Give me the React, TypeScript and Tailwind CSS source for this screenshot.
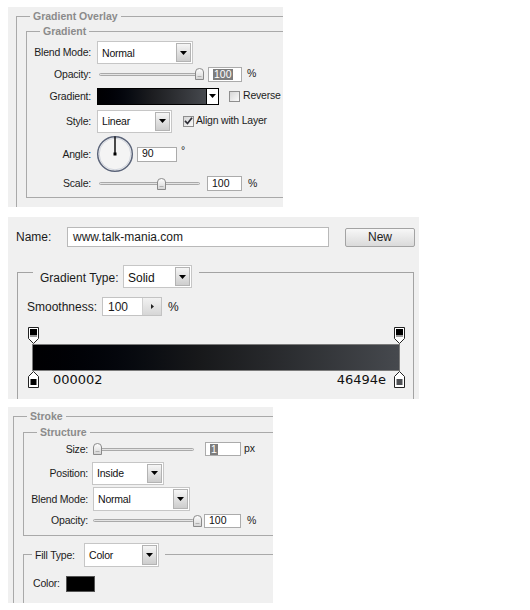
import React from "react";

function DownTri() {
  return (
    <svg width="7" height="4" viewBox="0 0 7 4">
      <path d="M0 0H7L3.5 4Z" fill="#000" />
    </svg>
  );
}

function Dropdown({ cls, text, textCls = "text-[10.5px] tracking-[-0.2px]" }: { cls: string; text: string; textCls?: string }) {
  return (
    <div className={`flex items-stretch bg-white border border-[#c6c6c6] ${cls}`}>
      <span className={`flex-1 flex items-center pl-[4px] pt-[2px] text-[#111] ${textCls}`}>{text}</span>
      <div className="w-[15px] my-[1px] mr-[1px] border border-[#b3b3b3] bg-linear-to-b from-[#f6f6f6] to-[#cdcdcd] flex items-center justify-center">
        <DownTri />
      </div>
    </div>
  );
}

function Thumb() {
  return (
    <svg width="9" height="12" viewBox="0 0 9 12">
      <defs>
        <linearGradient id="tg" x1="0" y1="0" x2="0" y2="1">
          <stop offset="0" stopColor="#ffffff" />
          <stop offset="1" stopColor="#d4d4d4" />
        </linearGradient>
      </defs>
      <path d="M0.5 11.5V4Q0.5 0.5 4.5 0.5Q8.5 0.5 8.5 4V11.5Z" fill="url(#tg)" stroke="#8a8a8a" />
      <path d="M2.5 8.5H6.5" stroke="#b0b0b0" />
    </svg>
  );
}

function Slider({ thumbCls }: { thumbCls: string }) {
  return (
    <div className="relative w-[106px] h-[14px] flex items-center">
      <div className="ml-[2px] w-[101px] h-[3px] rounded-full border border-[#a9a9a9] bg-[#e4e4e4]" />
      <div className={`absolute top-[1px] ${thumbCls}`}>
        <Thumb />
      </div>
    </div>
  );
}

function Box({ cls, children }: { cls: string; children: React.ReactNode }) {
  return (
    <div className={`bg-white border border-[#ababab] flex items-center pl-[4px] text-[10.5px] text-[#111] ${cls}`}>
      {children}
    </div>
  );
}

function Sel({ children }: { children: React.ReactNode }) {
  return <span className="bg-[#7d7d7d] text-white leading-[11px] px-[1px]">{children}</span>;
}

function Checkbox({ checked }: { checked?: boolean }) {
  return (
    <div className="w-[11px] h-[11px] border border-[#8e8e8e] bg-linear-to-br from-[#d6d6d6] to-[#fafafa] flex items-center justify-center">
      {checked && (
        <svg width="9" height="8" viewBox="0 0 9 8">
          <path d="M1 3.8L3.5 6.5L8 0.8" stroke="#2c2c34" strokeWidth="1.7" fill="none" />
        </svg>
      )}
    </div>
  );
}

function GroupTitle({ cls, children }: { cls: string; children: React.ReactNode }) {
  return (
    <div className={`-mt-[7px] h-[13px] w-fit px-[3px] bg-[#f0f0f0] text-[10.5px] font-bold leading-[13px] text-[#8b8b8b] ${cls}`}>
      {children}
    </div>
  );
}

function Label({ cls, left, children }: { cls: string; left?: boolean; children: React.ReactNode }) {
  return (
    <span className={`${left ? "text-left" : "text-right"} text-[10.5px] tracking-[-0.2px] text-[#1c1c1c] pt-[1px] ${cls}`}>
      {children}
    </span>
  );
}

function Txt({ cls = "", children }: { cls?: string; children: React.ReactNode }) {
  return <span className={`text-[10.5px] tracking-[-0.2px] text-[#1c1c1c] ${cls}`}>{children}</span>;
}

function Dial() {
  return (
    <svg width="38" height="38" viewBox="0 0 38 38">
      <circle cx="19" cy="19" r="17.3" fill="#f4f4f4" stroke="#5b6479" strokeWidth="1.5" />
      <circle cx="19" cy="19" r="15.8" fill="none" stroke="#d2d6de" strokeWidth="1" />
      <line x1="19" y1="19" x2="19" y2="1.5" stroke="#000" strokeWidth="1.4" />
      <rect x="17.5" y="17.5" width="3" height="3" fill="#000" />
    </svg>
  );
}

function TopStop() {
  return (
    <svg width="11" height="17" viewBox="0 0 11 17">
      <path d="M0.5 0.5H10.5V11.5L5.5 16.5L0.5 11.5Z" fill="#fff" stroke="#222" />
      <rect x="2" y="2" width="7" height="6" fill="#000" />
      <rect x="2" y="8" width="7" height="2" fill="#9a9a9a" />
    </svg>
  );
}

function BottomStop({ color }: { color: string }) {
  return (
    <svg width="11" height="17" viewBox="0 0 11 17">
      <path d="M5.5 0.5L10.5 5.5V16.5H0.5V5.5Z" fill="#fff" stroke="#222" />
      <rect x="2.5" y="8" width="6" height="6" fill={color} />
    </svg>
  );
}

export default function App() {
  return (
    <div className="w-[530px] h-[610px] bg-white font-['Liberation_Sans',Arial,sans-serif] flex flex-col overflow-hidden">
      {/* Panel 1: Gradient Overlay */}
      <div className="ml-[8px] mt-[7px] w-[275px] h-[200px] shrink-0 bg-[#f0f0f0] pt-[9px] pl-[8px]">
        <div className="h-[191px] border-l border-t border-[#a9a9a9]">
          <GroupTitle cls="ml-[13px]">Gradient Overlay</GroupTitle>
          <div className="ml-[9px] mt-[8px] h-[167px] border-l border-t border-b border-[#a9a9a9]">
            <GroupTitle cls="ml-[13px]">Gradient</GroupTitle>
            <div className="mt-[3px] h-[23px] flex items-center">
              <Label cls="w-[64px]">Blend Mode:</Label>
              <Dropdown cls="ml-[6px] w-[96px] h-[23px]" text="Normal" />
            </div>
            <div className="h-[20px] flex items-center">
              <Label cls="w-[64px]">Opacity:</Label>
              <div className="ml-[6px]">
                <Slider thumbCls="left-[98px]" />
              </div>
              <Box cls="ml-[5px] w-[34px] h-[15px]">
                <Sel>100</Sel>
              </Box>
              <Txt cls="ml-[5px]">%</Txt>
            </div>
            <div className="h-[24px] flex items-center">
              <Label cls="w-[64px]">Gradient:</Label>
              <div className="ml-[6px] w-[122px] h-[17px] border border-black flex">
                <div className="flex-1 bg-linear-to-r from-[#000002] via-[#1c1d20] to-[#46494e]" />
                <div className="w-[12px] bg-white border-l border-black flex items-center justify-center">
                  <DownTri />
                </div>
              </div>
              <div className="ml-[10px]">
                <Checkbox />
              </div>
              <Txt cls="ml-[3px]">Reverse</Txt>
            </div>
            <div className="h-[26px] flex items-center">
              <Label cls="w-[64px]">Style:</Label>
              <Dropdown cls="ml-[6px] w-[75px] h-[23px]" text="Linear" />
              <div className="ml-[11px]">
                <Checkbox checked />
              </div>
              <Txt cls="ml-[2px]">Align with Layer</Txt>
            </div>
            <div className="h-[40px] flex items-center">
              <Label cls="w-[64px]">Angle:</Label>
              <div className="ml-[5px] flex">
                <Dial />
              </div>
              <Box cls="ml-[3px] w-[40px] h-[15px]">90</Box>
              <Txt cls="ml-[4px] self-start mt-[10px] leading-[12px]">°</Txt>
            </div>
            <div className="h-[19px] flex items-center">
              <Label cls="w-[64px]">Scale:</Label>
              <div className="ml-[6px]">
                <Slider thumbCls="left-[60px]" />
              </div>
              <Box cls="ml-[4px] w-[35px] h-[15px]">100</Box>
              <Txt cls="ml-[6px]">%</Txt>
            </div>
          </div>
        </div>
      </div>

      {/* Panel 2: Gradient editor */}
      <div className="ml-[8px] mt-[10px] w-[411px] h-[182px] shrink-0 bg-[#f0f0f0] pt-[10px] text-[12px] text-[#1a1a1a]">
        <div className="flex items-center h-[20px] pl-[8px]">
          <span className="w-[51px]">Name:</span>
          <div className="w-[262px] h-[20px] bg-white border border-[#b9b9b9] pl-[5px] flex items-center">
            www.talk-mania.com
          </div>
          <div className="ml-[16px] w-[70px] h-[19px] rounded-[2px] border border-[#a3a3a3] bg-linear-to-b from-[#f7f7f7] to-[#dadada] flex items-center justify-center text-[#222]">
            New
          </div>
        </div>
        <div className="ml-[9px] mt-[25px] w-[397px] h-[127px] border-l border-t border-r border-[#a3a3a3]">
          <div className="-mt-[8px] ml-[15px] px-[7px] w-fit h-[23px] bg-[#f0f0f0] flex items-center">
            <span className="w-[83px] pt-[2px]">Gradient Type:</span>
            <Dropdown cls="w-[69px] h-[23px]" text="Solid" textCls="text-[12px] pl-[3px]" />
          </div>
          <div className="mt-[9px] ml-[9px] h-[19px] flex items-center">
            <span className="w-[75px]">Smoothness:</span>
            <div className="w-[60px] h-[19px] border border-[#c3c3c3] flex">
              <div className="w-[39px] bg-white pl-[5px] flex items-center">100</div>
              <div className="flex-1 bg-linear-to-b from-[#f2f2f2] to-[#d6d6d6] border-l border-[#d0d0d0] flex items-center justify-center">
                <svg width="3" height="5" viewBox="0 0 3 5">
                  <path d="M0 0L3 2.5L0 5Z" fill="#222" />
                </svg>
              </div>
            </div>
            <span className="ml-[6px]">%</span>
          </div>
          <div className="mt-[11px] ml-[10px] w-[377px] h-[17px] flex justify-between">
            <TopStop />
            <TopStop />
          </div>
          <div className="ml-[14px] w-[368px] h-[27px] border border-[#7b7b7b] bg-linear-to-r from-[#000002] via-[#17181a] via-45% to-[#46494e]" />
          <div className="ml-[10px] w-[377px] h-[17px] flex items-center">
            <BottomStop color="#000" />
            <span className="ml-[14px] font-['DejaVu_Sans',Verdana,sans-serif] text-[13px] text-[#111]">000002</span>
            <span className="flex-1" />
            <span className="mr-[8px] font-['DejaVu_Sans',Verdana,sans-serif] text-[13px] text-[#111]">46494e</span>
            <BottomStop color="#4d4f53" />
          </div>
        </div>
      </div>

      {/* Panel 3: Stroke */}
      <div className="ml-[8px] mt-[8px] w-[265px] h-[196px] shrink-0 bg-[#f0f0f0] pt-[9px] pl-[5px]">
        <div className="h-[187px] border-l border-t border-[#a9a9a9]">
          <GroupTitle cls="ml-[13px]">Stroke</GroupTitle>
          <div className="ml-[9px] mt-[9px] h-[104px] border-l border-t border-b border-[#a9a9a9]">
            <GroupTitle cls="ml-[13px]">Structure</GroupTitle>
            <div className="mt-[2px] h-[16px] flex items-center">
              <Label cls="w-[64px]">Size:</Label>
              <div className="ml-[3px]">
                <Slider thumbCls="left-[2px]" />
              </div>
              <Box cls="ml-[8px] w-[36px] h-[14px]">
                <Sel>1</Sel>
              </Box>
              <Txt cls="ml-[3px]">px</Txt>
            </div>
            <div className="mt-[4px] h-[24px] flex items-center">
              <Label cls="w-[64px]">Position:</Label>
              <Dropdown cls="ml-[4px] w-[72px] h-[23px]" text="Inside" />
            </div>
            <div className="mt-[2px] h-[24px] flex items-center">
              <Label cls="w-[64px]">Blend Mode:</Label>
              <Dropdown cls="ml-[5px] w-[97px] h-[24px]" text="Normal" />
            </div>
            <div className="h-[19px] flex items-center">
              <Label cls="w-[64px]">Opacity:</Label>
              <div className="ml-[3px]">
                <Slider thumbCls="left-[102px]" />
              </div>
              <Box cls="ml-[7px] w-[37px] h-[14px]">100</Box>
              <Txt cls="ml-[6px]">%</Txt>
            </div>
          </div>
          <div className="ml-[9px] mt-[18px] h-[49px] border-l border-t border-[#a9a9a9]">
            <div className="-mt-[12px] ml-[8px] pl-[3px] pr-[6px] w-fit h-[24px] bg-[#f0f0f0] flex items-center">
              <Label cls="w-[43px]" left>Fill Type:</Label>
              <Dropdown cls="ml-[6px] w-[75px] h-[24px]" text="Color" />
            </div>
            <div className="mt-[8px] ml-[9px] h-[17px] flex items-center">
              <Label cls="w-[33px]" left>Color:</Label>
              <div className="w-[29px] h-[16px] bg-black border border-[#555]" />
            </div>
          </div>
        </div>
      </div>
    </div>
  );
}
